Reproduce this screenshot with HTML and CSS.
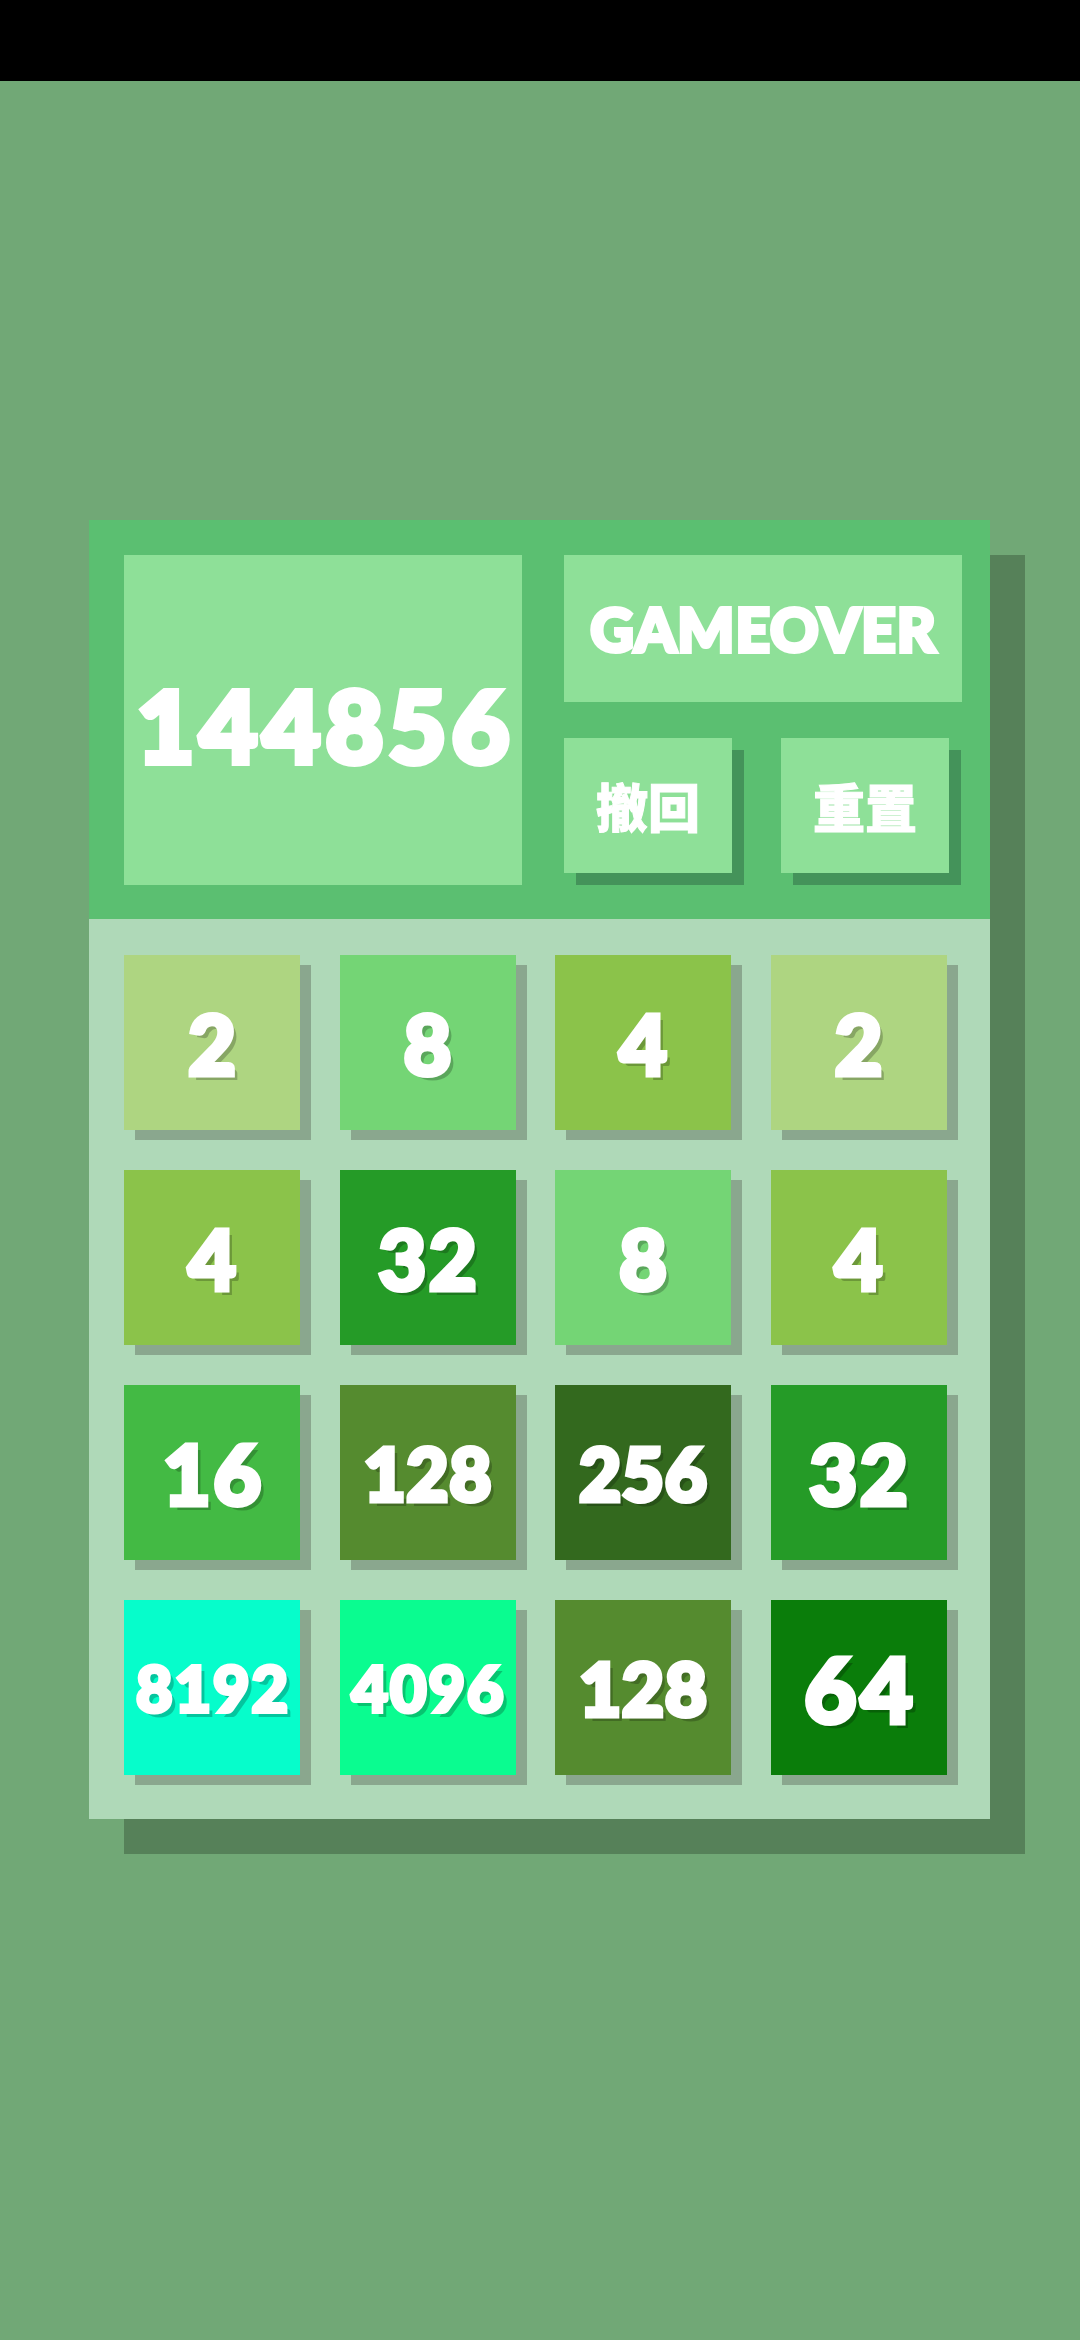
FILE: index.html
```html
<!DOCTYPE html>
<html lang="zh">
<head>
<meta charset="utf-8">
<title>2048</title>
<link rel="stylesheet" href="styles.css">
</head>
<body>
<div class="statusbar"></div>
<main class="stage">
  <section class="panel">
    <header class="head">
      <div class="score">144856</div>
      <div class="side">
        <div class="status">GAMEOVER</div>
        <div class="btns">
          <div class="btn">撤回</div>
          <div class="btn">重置</div>
        </div>
      </div>
    </header>
    <div class="grid">
      <div class="tile t2">2</div>
      <div class="tile t8">8</div>
      <div class="tile t4">4</div>
      <div class="tile t2">2</div>

      <div class="tile t4">4</div>
      <div class="tile t32">32</div>
      <div class="tile t8">8</div>
      <div class="tile t4">4</div>

      <div class="tile t16">16</div>
      <div class="tile t128 d3">128</div>
      <div class="tile t256 d3">256</div>
      <div class="tile t32">32</div>

      <div class="tile t8192 d4">8192</div>
      <div class="tile t4096 d4">4096</div>
      <div class="tile t128 d3">128</div>
      <div class="tile t64 big">64</div>
    </div>
  </section>
</main>
</body>
</html>
```

FILE: styles.css
```css
html, body {
  margin: 0;
  padding: 0;
}
body {
  width: 1080px;
  height: 2340px;
  background: #71a876;
  font-family: "Lato", "Roboto", "Noto Sans CJK SC", sans-serif;
  overflow: hidden;
}
.statusbar {
  height: 81px;
  background: #000;
}
.stage {
  padding: 439px 0 0 89px;
}
.panel {
  width: 901px;
  box-shadow: 35px 35px 0 #568159;
}
.head {
  background: #5bbf71;
  display: flex;
  gap: 42px;
  padding: 35px 28px 34px 35px;
}
.score {
  width: 398px;
  height: 330px;
  background: #8ee098;
  color: #fff;
  font-weight: 900;
  font-size: 100px;
  letter-spacing: 5px;
  -webkit-text-stroke: 6px #fff;
  padding: 8px 0 0 5px;
  box-sizing: border-box;
  display: flex;
  align-items: center;
  justify-content: center;
}
.side {
  width: 398px;
  display: flex;
  flex-direction: column;
  gap: 36px;
}
.status {
  height: 147px;
  background: #8ee098;
  color: #fff;
  font-weight: 900;
  font-size: 60px;
  letter-spacing: 1px;
  -webkit-text-stroke: 4px #fff;
  padding-left: 1px;
  display: flex;
  align-items: center;
  justify-content: center;
}
.btns {
  display: flex;
  justify-content: space-between;
  padding-right: 13px;
}
.btn {
  width: 168px;
  height: 135px;
  background: #8ee098;
  box-shadow: 12px 12px 0 #44935a;
  color: #fff;
  font-family: "Noto Sans CJK SC", sans-serif;
  font-weight: 900;
  font-size: 52px;
  -webkit-text-stroke: 1px #fff;
  display: flex;
  align-items: center;
  justify-content: center;
}
.grid {
  background: #afd9b8;
  display: grid;
  grid-template-columns: repeat(4, 176px);
  grid-auto-rows: 175px;
  column-gap: 39.5px;
  row-gap: 40px;
  padding: 36px 0 44px 35px;
}
.tile {
  box-shadow: 11px 10px 0 #8aa78e;
  color: #fff;
  font-weight: 900;
  font-size: 82px;
  letter-spacing: 3px;
  padding-left: 3px;
  -webkit-text-stroke: 5px #fff;
  text-shadow: 5px 5px 0 rgba(0, 0, 0, 0.22);
  display: flex;
  align-items: center;
  justify-content: center;
}
.tile.d3 { font-size: 72px; letter-spacing: 1px; padding-left: 1px; }
.tile.d4 { font-size: 63px; letter-spacing: 2px; padding-left: 2px; -webkit-text-stroke: 4px #fff; }
.tile.big { font-size: 90px; letter-spacing: 4px; padding-left: 4px; }
.t2 { background: #aed581; }
.t4 { background: #8bc34a; }
.t8 { background: #74d575; }
.t16 { background: #43ba44; }
.t32 { background: #259b27; }
.t64 { background: #0a7d0a; }
.t128 { background: #558b2f; }
.t256 { background: #33691e; }
.t4096 { background: #0afc90; }
.t8192 { background: #06fdcb; }
```
